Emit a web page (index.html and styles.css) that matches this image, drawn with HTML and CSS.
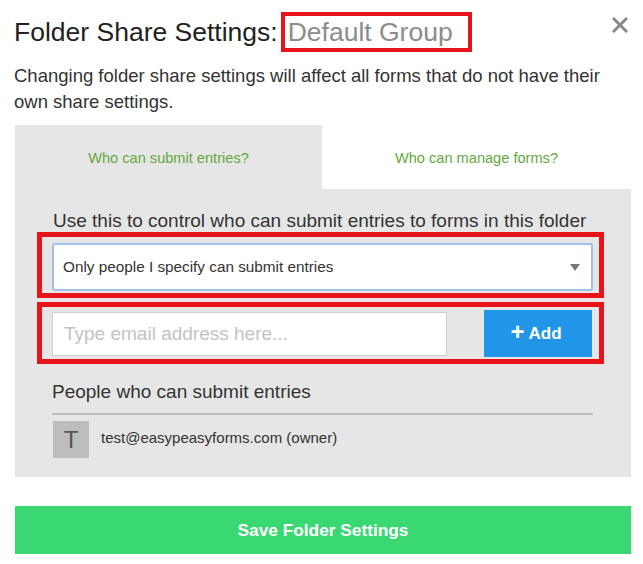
FILE: index.html
```html
<!DOCTYPE html>
<html>
<head>
<meta charset="utf-8">
<link rel="stylesheet" href="styles.css">
</head>
<body>
<div class="modal">
  <div class="header">
    <h1 class="title">Folder Share Settings:<span class="group">Default Group</span></h1>
    <button class="close" aria-label="Close">
      <svg width="16" height="16" viewBox="0 0 16 16"><path d="M2 2L14 14M14 2L2 14" stroke="#8a8a8a" stroke-width="3" stroke-linecap="square"/></svg>
    </button>
  </div>
  <p class="desc">Changing folder share settings will affect all forms that do not have their own share settings.</p>
  <div class="panel">
    <div class="tabs">
      <div class="tab active">Who can submit entries?</div>
      <div class="tab">Who can manage forms?</div>
    </div>
    <div class="panel-body">
      <p class="lead">Use this to control who can submit entries to forms in this folder</p>
      <div class="mark mark-select">
        <div class="select">
          <span>Only people I specify can submit entries</span>
          <svg class="caret" width="10" height="7" viewBox="0 0 10 7"><path d="M0 0H10L5 7Z" fill="#777"/></svg>
        </div>
      </div>
      <div class="mark mark-add">
        <div class="input">Type email address here...</div>
        <button class="add"><span class="plus">+</span>Add</button>
      </div>
      <div class="people-title">People who can submit entries</div>
      <div class="person">
        <div class="avatar">T</div>
        <div class="email">test@easypeasyforms.com (owner)</div>
      </div>
    </div>
  </div>
  <button class="save">Save Folder Settings</button>
</div>
</body>
</html>
```

FILE: styles.css
```css
* { box-sizing: border-box; }
html, body { margin: 0; padding: 0; background: #fff; }
body { font-family: "Liberation Sans", Arial, sans-serif; color: #333; }

.modal { width: 643px; padding: 12px 12px 0 15px; }

.header { display: flex; justify-content: space-between; align-items: flex-start; height: 40px; }
.title {
  margin: 0 0 0 -1px;
  font-size: 26.5px;
  font-weight: normal;
  line-height: 40px;
  color: #222;
  display: flex;
  align-items: center;
}
.group {
  display: inline-block;
  margin-left: 3px;
  border: 4px solid #e8141c;
  padding: 0 15px 0 3px;
  line-height: 32px;
  color: #8c8c8c;
}
.close {
  border: 0; background: none; padding: 0; margin: 5px 3px 0 0;
  width: 16px; height: 16px; display: block;
}
.close svg { display: block; }

.desc {
  margin: 11px 0 0 -1px;
  font-size: 18.5px;
  line-height: 26px;
  color: #333;
  width: 600px;
}

.panel { margin-top: 10px; width: 616px; background: #e6e6e6; height: 352px; }
.tabs { display: flex; height: 64px; }
.tab {
  flex: 0 0 307px;
  display: flex; align-items: center; justify-content: center;
  font-size: 14.6px; color: #63a83d;
  padding-top: 2px;
}
.tab + .tab { flex: 1; background: #fff; }

.panel-body { padding: 21px 0 0 22px; }
.lead { margin: 0 0 0 16px; font-size: 19px; line-height: 22px; color: #333; }

.mark { border: 5px solid #e8141c; width: 567px; }
.mark-select { padding: 6px 6px 2px 10px; }
.select {
  height: 48px;
  background: #fff;
  border: 2px solid #9fc0ea;
  border-radius: 3px;
  display: flex; align-items: center; justify-content: space-between;
  padding: 0 11px 0 9px;
  font-size: 15.3px; color: #333;
}
.caret { display: block; }

.mark-add {
  margin-top: 4px;
  height: 62px;
  display: flex; align-items: center; justify-content: space-between;
  padding: 1px 7px 0 10px;
}
.input {
  width: 395px; height: 44px;
  background: #fff;
  border: 1px solid #cfcfcf;
  display: flex; align-items: center;
  padding-left: 11px;
  font-size: 19px; color: #c2c2c2;
}
.add {
  width: 108px; height: 47px;
  background: #2196e9;
  border: 0;
  color: #fff;
  font-family: "Liberation Sans", Arial, sans-serif;
  font-size: 17px; font-weight: bold;
  display: flex; align-items: center; justify-content: center;
  padding: 0 4px 0 0;
}
.plus { font-size: 24px; margin-right: 4px; line-height: 1; margin-top: -3px; }

.people-title {
  margin: 17px 0 0 15px;
  font-size: 19px; line-height: 22px; color: #333;
  width: 541px;
  padding-bottom: 10px;
  border-bottom: 2px solid #bcbcbc;
}
.person { display: flex; align-items: center; margin: 6px 0 0 16px; }
.avatar {
  width: 36px; height: 37px;
  background: #bdbdbd;
  color: #555;
  font-size: 24px;
  display: flex; align-items: center; justify-content: center;
}
.email { margin-left: 12px; font-size: 15px; color: #333; margin-top: -4px; }

.save {
  display: block;
  margin-top: 29px;
  width: 616px; height: 48px;
  background: #3ad873;
  border: 0;
  color: #fff;
  font-family: "Liberation Sans", Arial, sans-serif;
  font-size: 17.3px; font-weight: bold;
}
```
